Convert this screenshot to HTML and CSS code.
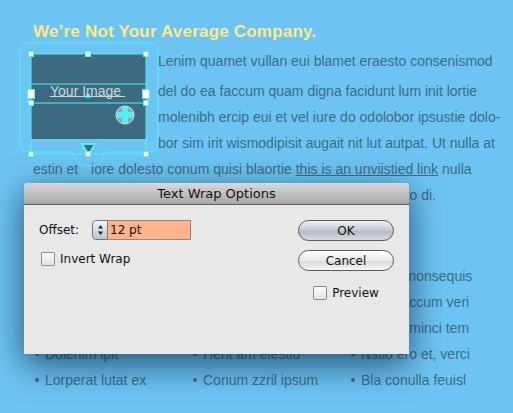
FILE: index.html
```html
<!DOCTYPE html>
<html lang="en">
<head>
    <meta charset="UTF-8">
    <title>Text Wrap Options</title>
    <link rel="stylesheet" href="styles.css">
</head>
<body>
    <div class="page">
        <h1 class="headline">We’re Not Your Average Company.</h1>

        <div class="wrap-area">
            <div class="image-frame">
                <svg width="142" height="130" viewBox="18 40 142 130">
                    <!-- text wrap boundary -->
                    <path d="M30 43 H148 Q158 43 158 53 V141 Q158 152 148 152 H106 Q103 152 103 158 Q100 166 89 166 Q78 166 75 158 Q74 152 70 152 H30 Q20 152 20 141 V53 Q20 43 30 43 Z" fill="none" stroke="#52f0f5" stroke-width="1"/>
                    <!-- image -->
                    <rect x="31" y="54" width="115" height="85" fill="#3d6a80"/>
                    <rect x="31" y="54" width="115" height="100" fill="none" stroke="#52f0f5" stroke-width="1"/>
                    <line x1="31" y1="84" x2="146" y2="84" stroke="#52f0f5"/>
                    <line x1="31" y1="103" x2="146" y2="103" stroke="#52f0f5"/>
                    <text x="50" y="96" class="img-label">Your Image</text>
                    <line x1="50" y1="96.5" x2="125" y2="96.5" stroke="#c9d6de"/>
                    <!-- move handle -->
                    <circle cx="125" cy="115" r="9" fill="#7fa8b8" stroke="#d8e4ea"/>
                    <path d="M122 107 H128 V112 H133 V118 H128 V123 H122 V118 H117 V112 H122 Z" fill="#52f0f5"/>
                    <!-- overflow triangle -->
                    <path d="M82 144 H95 L88.5 155 Z" fill="#3d6a80" stroke="#52f0f5" stroke-width="2"/>
                    <!-- handles -->
                    <g fill="#fff" stroke="#52f0f5" stroke-width="1">
                        <rect x="28.5" y="51.5" width="5" height="5"/>
                        <rect x="85.5" y="51.5" width="5" height="5"/>
                        <rect x="143.5" y="51.5" width="5" height="5"/>
                        <rect x="28.5" y="100.5" width="5" height="5"/>
                        <rect x="143.5" y="100.5" width="5" height="5"/>
                        <rect x="28.5" y="151.5" width="5" height="5"/>
                        <rect x="85.5" y="151.5" width="5" height="5"/>
                        <rect x="143.5" y="151.5" width="5" height="5"/>
                        <rect x="27.5" y="89.5" width="7" height="9"/>
                        <rect x="142.5" y="89.5" width="7" height="9"/>
                    </g>
                    <rect x="86" y="94" width="4" height="4" fill="#52f0f5"/>
                </svg>
            </div>
            <div class="wrap-lines">
                <span class="line first">Lenim quamet vullan eui blamet eraesto consenismod</span>
                <span class="line">del do ea faccum quam digna facidunt lum init lortie</span>
                <span class="line">molenibh ercip eui et vel iure do odolobor ipsustie dolo-</span>
                <span class="line">bor sim irit wismodipisit augait nit lut autpat. Ut nulla at</span>
            </div>
        </div>
        <p class="body-text">
            <span class="line">estin et <span class="skip">iore dolesto conum quisi blaortie <a href="#">this is an unviistied link</a> nulla</span></span>
            <span class="line">faccum dolore veliquat lum zzril ullam, sum vel aliquat eraesto di.</span>
        </p>

        <div class="columns">
            <ul>
                <li>Ut adipis nit nonsequis</li>
                <li>Iriure faccum veri</li>
                <li>Duismod minci tem</li>
                <li>Dolenim ipit</li>
                <li>Lorperat lutat ex</li>
            </ul>
            <ul>
                <li>Feum dolor sequis</li>
                <li>Quat at alis</li>
                <li>Vel iure minci</li>
                <li>Hent am elestio</li>
                <li>Conum zzril ipsum</li>
            </ul>
            <ul>
                <li>Exeros nonsequis</li>
                <li>Ad tat accum veri</li>
                <li>Wisl iusminci tem</li>
                <li>Nstio ero et, verci</li>
                <li>Bla conulla feuisl</li>
            </ul>
        </div>
    </div>

    <div class="dialog">
        <div class="dialog-title">Text Wrap Options</div>
        <div class="dialog-body">
            <div class="dialog-fields">
                <div class="field-row">
                    <label class="field-label">Offset:</label>
                    <span class="stepper">
                        <svg width="9" height="14" viewBox="0 0 9 14">
                            <path d="M4.5 2 L7 5.5 H2 Z" fill="#222"/>
                            <path d="M4.5 12 L7 8.5 H2 Z" fill="#222"/>
                        </svg>
                    </span>
                    <input class="offset-input" type="text" value="12 pt">
                </div>
                <label class="check-row"><span class="checkbox"></span>Invert Wrap</label>
            </div>
            <div class="dialog-actions">
                <button class="btn btn-default">OK</button>
                <button class="btn">Cancel</button>
                <label class="check-row preview"><span class="checkbox"></span>Preview</label>
            </div>
        </div>
    </div>
</body>
</html>
```

FILE: styles.css
```css
body {
    margin: 0;
    background: #6dc4f2;
    font-family: "Liberation Sans", Arial, sans-serif;
    color: #3e6b88;
    overflow: hidden;
}
.page {
    padding: 22px 0 0 33px;
    height: 391px;
}
.headline {
    margin: 0 0 6px 0;
    font-size: 17px;
    line-height: 20px;
    font-weight: bold;
    color: #fbe98b;
    letter-spacing: 0.2px;
}
.wrap-area {
    display: flex;
    margin-left: -15px;
}
.image-frame {
    width: 140px;
    height: 108px;
    flex: none;
}
.image-frame svg {
    display: block;
    margin-top: -8px;
}
.img-label {
    font-family: "Liberation Sans", Arial, sans-serif;
    font-size: 14px;
    fill: #c9d6de;
}
.line {
    display: block;
    font-size: 14px;
    line-height: 26px;
    white-space: nowrap;
}
.line.first {
    margin-bottom: 4px;
}
.body-text {
    margin: 0;
}
.skip {
    margin-left: 9px;
}
.body-text a {
    color: #3e6b88;
}
.columns {
    display: flex;
    margin-top: 55px;
}
.columns ul {
    margin: 0;
    padding: 0 0 0 12px;
    width: 146px;
    list-style: none;
}
.columns li {
    position: relative;
    font-size: 14px;
    line-height: 26px;
}
.columns li::before {
    content: "";
    position: absolute;
    left: -10px;
    top: 11px;
    width: 4px;
    height: 4px;
    border-radius: 50%;
    background: #3e6b88;
}
.dialog {
    position: absolute;
    left: 24px;
    top: 183px;
    width: 385px;
    height: 171px;
    background: #e8e8e8;
    border-radius: 4px 4px 0 0;
    box-shadow: 0 10px 34px rgba(5, 30, 60, 0.7);
    font-family: "DejaVu Sans", sans-serif;
    color: #111;
    font-size: 12px;
}
.dialog-title {
    height: 21px;
    line-height: 21px;
    text-align: center;
    background: linear-gradient(#d9d9d9, #a7a7a7);
    border-bottom: 1px solid #5e5e5e;
    border-radius: 4px 4px 0 0;
    font-size: 13px;
}
.dialog-body {
    display: flex;
    justify-content: space-between;
    padding: 15px 15px 0 15px;
}
.field-row {
    display: flex;
    align-items: center;
    height: 20px;
}
.field-label {
    width: 53px;
}
.stepper {
    width: 14px;
    height: 18px;
    border: 1px solid #777;
    border-radius: 4px 0 0 4px;
    background: linear-gradient(#f4f6f9, #b8c2cf);
    display: flex;
    align-items: center;
    justify-content: center;
}
.offset-input {
    width: 78px;
    height: 16px;
    margin: 0;
    padding: 1px 2px;
    border: 1px solid #8c8c8c;
    border-left: none;
    background: #ffb38a;
    font-family: "DejaVu Sans", sans-serif;
    font-size: 12px;
    color: #111;
    outline: none;
}
.check-row {
    display: flex;
    align-items: center;
    gap: 5px;
    margin-top: 12px;
    margin-left: 2px;
}
.checkbox {
    width: 12px;
    height: 12px;
    border: 1px solid #8a8a8a;
    border-radius: 2px;
    background: linear-gradient(#fdfdfd, #e3e3e3);
}
.dialog-actions {
    display: flex;
    flex-direction: column;
    align-items: center;
    width: 96px;
}
.btn {
    width: 96px;
    height: 21px;
    margin-bottom: 9px;
    border: 1px solid #5b5b5b;
    border-radius: 11px;
    background: linear-gradient(#ffffff, #e8e8e8 50%, #d8d8d8 51%, #f6f6f6);
    font-family: "DejaVu Sans", sans-serif;
    font-size: 12px;
    color: #111;
    padding: 0;
}
.btn-default {
    background: linear-gradient(#eef0f3, #c4c9d0 50%, #b3b9c2 51%, #d6dbe1);
}
.check-row.preview {
    margin-top: 6px;
    margin-left: 0;
}
```
